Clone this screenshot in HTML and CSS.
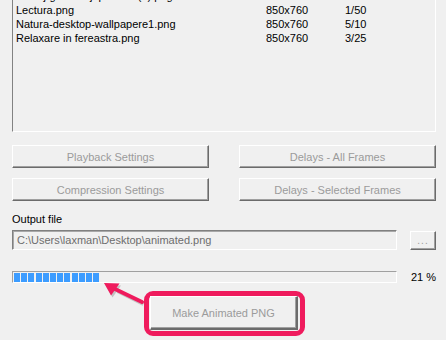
FILE: index.html
```html
<!DOCTYPE html>
<html>
<head>
<meta charset="utf-8">
<link rel="stylesheet" href="styles.css">
</head>
<body>
<div class="win">
  <div class="list">
    <div class="row"><span>Peisaj-gradina-japoneza (2).png</span><span>850x760</span><span>7/50</span></div>
    <div class="row"><span>Lectura.png</span><span>850x760</span><span>1/50</span></div>
    <div class="row"><span>Natura-desktop-wallpapere1.png</span><span>850x760</span><span>5/10</span></div>
    <div class="row"><span>Relaxare in fereastra.png</span><span>850x760</span><span>3/25</span></div>
  </div>

  <div class="btn-grid">
    <button class="btn">Playback Settings</button>
    <button class="btn">Delays - All Frames</button>
    <button class="btn">Compression Settings</button>
    <button class="btn">Delays - Selected Frames</button>
  </div>

  <div class="label">Output file</div>
  <div class="field-row">
    <div class="field">C:\Users\laxman\Desktop\animated.png</div>
    <button class="btn small">...</button>
  </div>

  <div class="prog-row">
    <div class="prog">
      <span class="chunk"></span><span class="chunk"></span><span class="chunk"></span><span class="chunk"></span>
      <span class="chunk"></span><span class="chunk"></span><span class="chunk"></span><span class="chunk"></span>
      <span class="chunk"></span><span class="chunk"></span><span class="chunk"></span><span class="chunk"></span>
    </div>
    <div class="pct">21 %</div>
  </div>

  <div class="make-wrap">
    <div class="hilite">
      <button class="btn make">Make Animated PNG</button>
    </div>
  </div>

  <svg class="arrow" width="60" height="40" viewBox="95 275 60 40">
    <g transform="translate(1.5,2)" fill="#000" stroke="#000" opacity="0.18">
      <line x1="116" y1="289" x2="142" y2="302" stroke-width="4"/>
      <polygon points="104,283 119.5,283.5 111,295.5" stroke="none"/>
    </g>
    <g fill="#ef1b5d" stroke="#ef1b5d">
      <line x1="115" y1="289" x2="142" y2="302" stroke-width="4" stroke-linecap="round"/>
      <polygon points="104,283 119.5,283.5 111,295.5" stroke="none"/>
    </g>
  </svg>
</div>
</body>
</html>
```

FILE: styles.css
```css
html, body {
  margin: 0;
  padding: 0;
  background: #f0f0f0;
}

body {
  font-family: "Liberation Sans", Arial, sans-serif;
  font-size: 11px;
  color: #000;
}

.win {
  position: relative;
  display: flex;
  flex-direction: column;
  padding: 0 10px 0 12px;
}

.win > * {
  flex-shrink: 0;
}

.list {
  margin-top: -14px;
  height: 146px;
  box-sizing: border-box;
  padding: 2px 0 0 3px;
  border-top: 1px solid #828282;
  border-left: 1px solid #828282;
  border-right: 1px solid #ffffff;
  border-bottom: 1px solid #ffffff;
  background: #f0f0f0;
}

.row {
  display: grid;
  grid-template-columns: 250px 79px 1fr;
  height: 14px;
  line-height: 14px;
  white-space: nowrap;
}

.btn {
  font-family: "Liberation Sans", Arial, sans-serif;
  font-size: 11px;
  color: #9b9b9b;
  background: #f0f0f0;
  margin: 0;
  padding: 0;
  box-sizing: border-box;
  border-top: 1px solid #ffffff;
  border-left: 1px solid #ffffff;
  border-right: 1px solid #6b6b6b;
  border-bottom: 1px solid #6b6b6b;
  box-shadow: inset -1px -1px 0 #a0a0a0;
  height: 23px;
  text-align: center;
}

.btn-grid {
  margin-top: 13px;
  display: grid;
  grid-template-columns: 197px 197px;
  grid-auto-rows: 23px;
  column-gap: 30px;
  row-gap: 10px;
}

.label {
  margin-top: 11px;
  height: 14px;
  line-height: 14px;
}

.field-row {
  margin-top: 4px;
  height: 20px;
  display: flex;
  align-items: flex-start;
  gap: 13px;
}

.field {
  width: 385px;
  height: 20px;
  box-sizing: border-box;
  border-top: 1px solid #808080;
  border-left: 1px solid #808080;
  border-right: 1px solid #ffffff;
  border-bottom: 1px solid #ffffff;
  box-shadow: inset 1px 1px 0 #a8a8a8;
  color: #6d6d6d;
  line-height: 18px;
  padding-left: 4px;
  white-space: nowrap;
}

.btn.small {
  width: 26px;
  height: 19px;
  line-height: 12px;
  margin-top: 1px;
  font-size: 10px;
  letter-spacing: 1px;
}

.prog-row {
  margin-top: 21px;
  height: 12px;
  display: flex;
  align-items: center;
  gap: 14px;
}

.prog {
  width: 385px;
  height: 12px;
  box-sizing: border-box;
  border-top: 1px solid #a0a0a0;
  border-left: 1px solid #a0a0a0;
  border-right: 1px solid #ffffff;
  border-bottom: 1px solid #ffffff;
  display: flex;
  gap: 1.2px;
  padding: 0 0 0 1px;
  align-items: center;
}

.chunk {
  width: 6px;
  height: 9px;
  background: #3c9cff;
}

.pct {
  line-height: 14px;
  color: #000;
}

.make-wrap {
  margin-top: 8px;
  display: flex;
  padding-left: 132px;
}

.hilite {
  display: flex;
  border: 5px solid #ef1b5d;
  border-radius: 9px;
  padding: 0 2px 1px 1px;
}

.btn.make {
  display: block;
  width: 148px;
  height: 34px;
  border-right-width: 2px;
  border-bottom-width: 2px;
}

.arrow {
  position: absolute;
  left: 95px;
  top: 275px;
}
```
